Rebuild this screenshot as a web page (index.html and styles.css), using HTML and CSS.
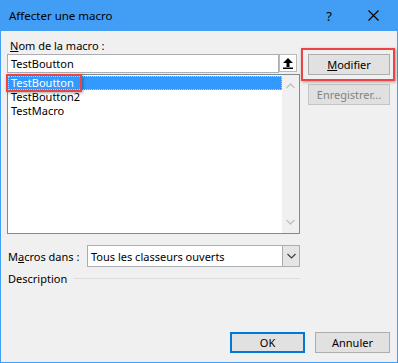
FILE: index.html
```html
<!DOCTYPE html>
<html lang="fr">
<head>
  <meta charset="UTF-8" />
  <title>Affecter une macro</title>
  <link rel="stylesheet" href="styles.css">
</head>
<body>

  <div class="window">
    <div class="titlebar">
      <span class="title">Affecter une macro</span>
      <span class="help">?</span>
      <span class="close">
        <svg width="11" height="11" viewBox="0 0 11 11"><path d="M0.5 0.5 L10.5 10.5 M10.5 0.5 L0.5 10.5" stroke="#000" stroke-width="1.1" fill="none"/></svg>
      </span>
    </div>

    <div class="content">
      <div class="main">
        <div class="left">
          <div class="label"><u>N</u>om de la macro :</div>
          <div class="name-row">
            <div class="textbox">TestBoutton</div>
            <div class="up-btn">
              <svg width="12" height="12" viewBox="0 0 12 12"><path d="M6 1 L11 6 L7.5 6 L7.5 10 L4.5 10 L4.5 6 L1 6 Z" fill="#000"/><rect x="1" y="10.5" width="10" height="1.5" fill="#000"/></svg>
            </div>
          </div>
          <div class="list">
            <div class="items">
              <div class="item selected">TestBoutton</div>
              <div class="item">TestBoutton2</div>
              <div class="item">TestMacro</div>
            </div>
            <div class="scrollbar">
              <svg width="9" height="6" viewBox="0 0 9 6"><path d="M0.5 5 L4.5 1 L8.5 5" stroke="#c2c2c2" stroke-width="1.4" fill="none"/></svg>
              <svg width="9" height="6" viewBox="0 0 9 6"><path d="M0.5 1 L4.5 5 L8.5 1" stroke="#c2c2c2" stroke-width="1.4" fill="none"/></svg>
            </div>
            <div class="mark mark-item"></div>
          </div>
          <div class="macros-row">
            <div class="label">M<u>a</u>cros dans :</div>
            <div class="select">
              <span class="select-text">Tous les classeurs ouverts</span>
              <div class="drop">
                <svg width="9" height="6" viewBox="0 0 9 6"><path d="M0.5 1 L4.5 5 L8.5 1" stroke="#404040" stroke-width="1.2" fill="none"/></svg>
              </div>
            </div>
          </div>
          <div class="desc-row">
            <span>Description</span>
            <div class="rule"></div>
          </div>
        </div>

        <div class="right">
          <div class="mark-wrap">
            <button class="btn"><u>M</u>odifier</button>
          </div>
          <button class="btn disabled">Enregistrer...</button>
        </div>
      </div>

      <div class="footer">
        <button class="btn ok">OK</button>
        <button class="btn">Annuler</button>
      </div>
    </div>
  </div>

</body>
</html>
```

FILE: styles.css
```css
body {
  margin: 0;
  font-family: "Noto Sans", "Liberation Sans", sans-serif;
  font-size: 11px;
  color: #000;
  background: #f0f0f0;
}

.window {
  width: 398px;
  height: 363px;
  box-sizing: border-box;
  border: 1px solid #429df5;
  border-top: none;
  background: #f0f0f0;
  display: flex;
  flex-direction: column;
}

.titlebar {
  height: 31px;
  background: #429df5;
  display: flex;
  align-items: center;
  margin: 0 -1px;
  padding-left: 9px;
}

.title {
  flex: 1;
  font-size: 11.5px;
}

.help {
  font-size: 13px;
  margin-right: 36px;
}

.close {
  display: flex;
  margin-right: 19px;
}

.content {
  flex: 1;
  display: flex;
  flex-direction: column;
  padding: 6px 6px 9px 6px;
}

.main {
  flex: 1;
  display: flex;
  gap: 8px;
}

.left {
  width: 293px;
  display: flex;
  flex-direction: column;
}

.label {
  height: 17px;
  line-height: 17px;
  padding-left: 3px;
  white-space: nowrap;
}

.name-row {
  display: flex;
  height: 19px;
}

.textbox {
  width: 272px;
  box-sizing: border-box;
  border: 1px solid #abadb3;
  background: #fff;
  padding-left: 3px;
  line-height: 17px;
}

.up-btn {
  width: 18px;
  height: 18px;
  box-sizing: border-box;
  border: 1px solid #b9b9b9;
  background: #fff;
  display: flex;
  align-items: center;
  justify-content: center;
}

.list {
  position: relative;
  margin-top: 1px;
  height: 160px;
  box-sizing: border-box;
  border: 1px solid #828790;
  background: #fff;
  display: flex;
}

.items {
  flex: 1;
  padding-top: 1px;
}

.item {
  height: 14px;
  line-height: 14px;
  padding-left: 3px;
}

.selected {
  background: #3399ff;
  color: #fff;
  box-sizing: border-box;
  border: 1px dotted #a9d0f5;
  padding-left: 2px;
  line-height: 12px;
}

.scrollbar {
  width: 17px;
  background: #f0f0f0;
  display: flex;
  flex-direction: column;
  align-items: center;
  justify-content: space-between;
  padding: 8px 0 8px;
}

.mark {
  position: absolute;
  border: 2px solid #ec4343;
  box-shadow: 1px 1px 3px rgba(0,0,0,0.35);
}

.mark-item {
  left: -2px;
  top: -1px;
  width: 72px;
  height: 14px;
}

.macros-row {
  display: flex;
  align-items: center;
  margin-top: 11px;
  height: 22px;
}

.macros-row .label {
  width: 80px;
  box-sizing: border-box;
  padding-left: 1px;
}

.select {
  flex: 1;
  height: 22px;
  box-sizing: border-box;
  border: 1px solid #abadb3;
  background: #fff;
  display: flex;
  align-items: center;
}

.select-text {
  flex: 1;
  padding-left: 3px;
}

.drop {
  width: 17px;
  height: 20px;
  box-sizing: border-box;
  border-left: 1px solid #acacac;
  background: #e5e5e5;
  display: flex;
  align-items: center;
  justify-content: center;
}

.desc-row {
  display: flex;
  align-items: center;
  margin-top: 1px;
  height: 20px;
  padding-left: 1px;
}

.rule {
  flex: 1;
  height: 1px;
  background: #dcdcdc;
  margin-left: 7px;
}

.right {
  width: 83px;
  padding-top: 17px;
  display: flex;
  flex-direction: column;
  gap: 9px;
}

.btn {
  width: 82px;
  height: 21px;
  box-sizing: border-box;
  border: 1px solid #adadad;
  background: #e1e1e1;
  font-family: inherit;
  font-size: 11px;
  color: #000;
  padding: 0;
}

.disabled {
  background: #e0e0e0;
  border-color: #c4c4c4;
  color: #838383;
}

.mark-wrap {
  position: relative;
}

.mark-wrap::after {
  content: "";
  position: absolute;
  left: -7px;
  top: -6px;
  width: 90px;
  height: 29px;
  border: 2px solid #ec4343;
  box-shadow: 1px 1px 3px rgba(0,0,0,0.35);
}

.footer {
  display: flex;
  justify-content: flex-end;
  gap: 10px;
  padding-right: 1px;
}

.footer .btn {
  width: 75px;
}

.ok {
  border: 2px solid #0078d7;
}
```
